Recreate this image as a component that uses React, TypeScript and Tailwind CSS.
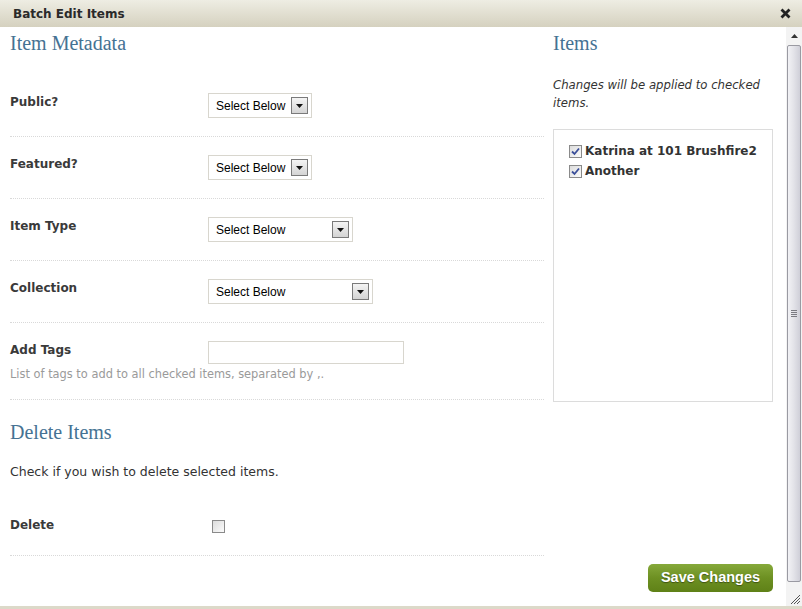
import React from "react";

const verdana = "font-['DejaVu_Sans',Verdana,sans-serif]";
const serif = "font-['Liberation_Serif',Georgia,serif]";
const arial = "font-['Liberation_Sans',Arial,sans-serif]";

function Arrow() {
    return (
        <span className="flex h-[17px] w-[17px] items-center justify-center border border-[#7a7a7a] bg-gradient-to-b from-[#f4f4f4] to-[#d4d4d4]">
            <svg width="7" height="4" viewBox="0 0 7 4">
                <path d="M0 0h7L3.5 4z" fill="#111" />
            </svg>
        </span>
    );
}

function SelectBox({ width }: { width: string }) {
    return (
        <div className={`flex h-[25px] items-center justify-between border border-[#d8d6ce] bg-white pl-[7px] pr-[3px] ${width}`}>
            <span className={`${arial} text-[12px] text-black`}>Select Below</span>
            <Arrow />
        </div>
    );
}

function Checkbox({ checked }: { checked?: boolean }) {
    return (
        <span className="flex h-[13px] w-[13px] shrink-0 items-center justify-center border border-[#8a8a8a] bg-gradient-to-br from-[#dcdcdc] to-[#fbfbfb]">
            {checked && (
                <svg width="9" height="9" viewBox="0 0 9 9">
                    <path d="M1 4.5l2.5 2.5L8 1.5" stroke="#3b4f9a" strokeWidth="1.8" fill="none" />
                </svg>
            )}
        </span>
    );
}

function Row({ label, children }: { label: string; children: React.ReactNode }) {
    return (
        <div className="flex border-b border-dotted border-[#d9d9d9] py-[18px]">
            <div className={`${verdana} w-[198px] text-[12px] font-bold text-[#3a3a3a]`}>{label}</div>
            {children}
        </div>
    );
}

export default function App() {
    return (
        <div className="flex h-[609px] w-[802px] flex-col overflow-hidden bg-white">
            {/* title bar */}
            <div className="flex h-[27px] shrink-0 items-center justify-between bg-gradient-to-b from-[#eeede3] to-[#d5d1bf] pl-[13px] pr-[11px]">
                <span className={`${verdana} text-[12px] font-bold text-[#2a2a2a]`}>Batch Edit Items</span>
                <svg width="11" height="11" viewBox="0 0 11 11">
                    <path d="M1.5 1.5l8 8M9.5 1.5l-8 8" stroke="#222" strokeWidth="2.8" />
                </svg>
            </div>

            <div className="flex min-h-0 flex-1 border-b-[3px] border-[#dcd9c9]">
                <div className="flex flex-1">
                    {/* left column */}
                    <div className="ml-[10px] w-[534px]">
                        <h2 className={`${serif} pt-[4px] text-[20px] leading-[24px] text-[#457293]`}>Item Metadata</h2>
                        <div className="pt-[20px]">
                            <Row label="Public?">
                                <SelectBox width="w-[104px]" />
                            </Row>
                            <Row label="Featured?">
                                <SelectBox width="w-[104px]" />
                            </Row>
                            <Row label="Item Type">
                                <SelectBox width="w-[145px]" />
                            </Row>
                            <Row label="Collection">
                                <SelectBox width="w-[165px]" />
                            </Row>
                            <div className="border-b border-dotted border-[#d9d9d9] pb-[18px] pt-[18px]">
                                <div className="flex">
                                    <div className={`${verdana} w-[198px] text-[12px] font-bold text-[#3a3a3a]`}>Add Tags</div>
                                    <div className="h-[23px] w-[196px] border border-[#d8d6ce]" />
                                </div>
                                <p className={`${verdana} mt-[3px] text-[11.4px] leading-[14px] text-[#9a9a9a]`}>
                                    List of tags to add to all checked items, separated by ,.
                                </p>
                            </div>
                        </div>

                        <h2 className={`${serif} pt-[20px] text-[20px] leading-[24px] text-[#457293]`}>Delete Items</h2>
                        <p className={`${verdana} mt-[20px] text-[12.5px] leading-[16px] text-[#333]`}>
                            Check if you wish to delete selected items.
                        </p>
                        <div className="mt-[36px] flex border-b border-dotted border-[#d9d9d9] pb-[21px]">
                            <div className={`${verdana} w-[202px] text-[12px] font-bold text-[#3a3a3a]`}>Delete</div>
                            <div className="pt-[4px]">
                                <Checkbox />
                            </div>
                        </div>
                    </div>

                    {/* right column */}
                    <div className="ml-[9px] flex w-[220px] flex-col">
                        <h2 className={`${serif} pt-[4px] text-[20px] leading-[24px] text-[#457293]`}>Items</h2>
                        <p className={`${verdana} mt-[21px] text-[11.7px] italic leading-[18px] text-[#333]`}>
                            Changes will be applied to checked items.
                        </p>
                        <div className="mt-[17px] h-[273px] border border-[#dcdcdc] px-[15px] pt-[11px]">
                            <label className="flex items-center gap-[3px] whitespace-nowrap">
                                <Checkbox checked />
                                <span className={`${verdana} text-[12px] font-bold leading-[20px] text-[#333]`}>Katrina at 101 Brushfire2</span>
                            </label>
                            <label className="flex items-center gap-[3px] whitespace-nowrap">
                                <Checkbox checked />
                                <span className={`${verdana} text-[12px] font-bold leading-[20px] text-[#333]`}>Another</span>
                            </label>
                        </div>
                        <div className="mt-auto mb-[14px] flex justify-end">
                            <button className={`${arial} h-[28px] w-[125px] rounded-[5px] bg-gradient-to-b from-[#86a93a] via-[#6d9022] to-[#5f8117] text-[14.5px] font-bold text-white [text-shadow:0_1px_1px_rgba(0,0,0,0.4)]`}>
                                Save Changes
                            </button>
                        </div>
                    </div>
                </div>

                {/* scrollbar */}
                <div className="ml-[11px] flex w-[16px] flex-col bg-[#f3f3f3]">
                    <div className="flex h-[18px] items-center justify-center">
                        <svg width="7" height="4" viewBox="0 0 7 4">
                            <path d="M0 4h7L3.5 0z" fill="#333" />
                        </svg>
                    </div>
                    <div className="mx-[1px] flex flex-1 items-center justify-center rounded-[2px] border border-[#9a9aa2] bg-gradient-to-r from-[#f2f2f5] via-[#e2e2e8] to-[#cfcfd8]">
                        <div className="flex flex-col gap-[1px]">
                            <span className="h-[1px] w-[6px] bg-[#7a7a82]" />
                            <span className="h-[1px] w-[6px] bg-[#7a7a82]" />
                            <span className="h-[1px] w-[6px] bg-[#7a7a82]" />
                            <span className="h-[1px] w-[6px] bg-[#7a7a82]" />
                        </div>
                    </div>
                    <div className="flex h-[24px] items-end justify-end pb-[1px] pr-[1px]">
                        <svg width="11" height="11" viewBox="0 0 11 11">
                            <path d="M1 10L10 1M4 10l6-6M7 10l3-3" stroke="#555" strokeWidth="1" />
                        </svg>
                    </div>
                </div>
            </div>
        </div>
    );
}
